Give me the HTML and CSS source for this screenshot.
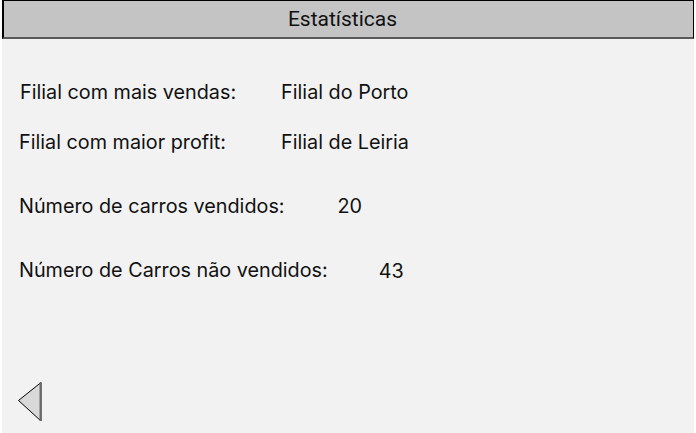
FILE: index.html
```html
<!DOCTYPE html>
<html lang="pt">
<head>
<meta charset="utf-8">
<title>Estatísticas</title>
<link rel="stylesheet" href="styles.css">
</head>
<body>
<div class="screen">
  <header class="topbar">Estatísticas</header>
  <main class="stats">
    <div class="row row-1"><span class="label">Filial com mais vendas:</span><span class="value">Filial do Porto</span></div>
    <div class="row row-2"><span class="label">Filial com maior profit:</span><span class="value">Filial de Leiria</span></div>
    <div class="row row-3"><span class="label">Número de carros vendidos:</span><span class="value">20</span></div>
    <div class="row row-4"><span class="label">Número de Carros não vendidos:</span><span class="value">43</span></div>
  </main>
  <footer class="footer">
    <button class="back" aria-label="Voltar">
      <svg width="26" height="42" viewBox="0 0 26 42">
        <polygon points="1.5,19.5 24,1.5 24,40" fill="#d9d9d9" stroke="#000" stroke-width="1"/>
        <line x1="23.5" y1="1.5" x2="23.5" y2="40" stroke="#6b6b6b" stroke-width="2"/>
      </svg>
    </button>
  </footer>
</div>
</body>
</html>
```
FILE: styles.css
```css
html, body {
  margin: 0;
  padding: 0;
  background: #ffffff;
}
body {
  font-family: Inter, "Noto Sans", sans-serif;
  color: #111;
}
.screen {
  margin-left: 2px;
  width: 692px;
  height: 433px;
  background: #f2f2f2;
  display: flex;
  flex-direction: column;
}
.topbar {
  box-sizing: border-box;
  height: 39px;
  background: #c4c4c4;
  border: 1px solid #000;
  border-left-width: 2px;
  border-bottom: 2px solid #5a5a5a;
  font-family: Roboto, sans-serif;
  font-size: 21px;
  line-height: 36px;
  text-align: center;
  color: #111;
  padding-right: 12px;
}
.stats {
  display: flex;
  flex-direction: column;
  padding-top: 40px;
  padding-left: 17px;
  font-size: 19.8px;
}
.row {
  display: flex;
  align-items: baseline;
  height: 26px;
  line-height: 26px;
}
.row-2 { margin-top: 24px; }
.row-3 { margin-top: 38px; }
.row-4 { margin-top: 38px; }
.row-1 .label { margin-left: 1px; }
.row-1 .value { margin-left: 45px; }
.row-2 .value { margin-left: 55px; }
.row-3 .value { margin-left: 53px; }
.row-4 .value { margin-left: 51px; position: relative; top: 1px; }
.footer {
  margin-top: auto;
  padding: 0 0 10px 15px;
}
.back {
  display: block;
  border: 0;
  padding: 0;
  background: none;
}
.back svg { display: block; }
```
